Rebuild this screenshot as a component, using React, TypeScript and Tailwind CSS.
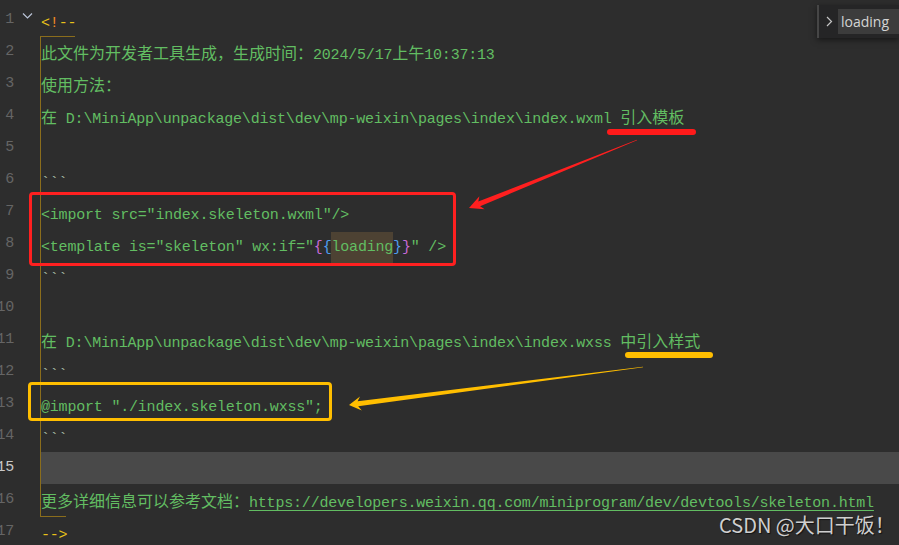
import type { ReactNode } from "react"

const mono = "font-['Liberation_Mono',monospace] text-[15px] tracking-[-0.2px]"

// CJK text sits at 16px full-width cells while the mono font runs at ~8.8px per char
function Zh({ children }: { children: ReactNode }) {
  return <span className="font-['Noto_Sans_CJK_SC',sans-serif] text-[16px] tracking-normal">{children}</span>
}

function Line({
  n,
  active = false,
  guide = true,
  children,
}: {
  n: number
  active?: boolean
  guide?: boolean
  children?: ReactNode
}) {
  return (
    <div className="flex h-8">
      <div className={`relative flex w-10 shrink-0 ${mono}`}>
        <div className={`flex w-[14px] justify-end leading-8 ${active ? "text-[#c8c8c8]" : "text-[#656565]"}`}>{n}</div>
        {n === 1 && (
          <svg className="absolute left-[22px] top-[8px]" width="11" height="8" viewBox="0 0 11 8">
            <path d="M1 1.5 L5.5 6 L10 1.5" fill="none" stroke="#b9c3d6" strokeWidth="1.2" />
          </svg>
        )}
      </div>
      {/* the row's strut uses the CJK font so code-only rows share the same baseline */}
      <div
        className={`relative flex-1 whitespace-nowrap font-['Noto_Sans_CJK_SC',sans-serif] text-[16px] leading-8 ${guide ? "border-l border-[#8a6d1c]" : "pl-px"} ${active ? "bg-[#494949]" : ""}`}
      >
        <span className={mono}>{children}</span>
      </div>
    </div>
  )
}

const green = "text-[#62bd62]"
const fence = "text-[#a3b8a3]"

export default function App() {
  return (
    <div className="relative h-[545px] w-[899px] overflow-hidden bg-[#2d2d2d]">
      <div className="flex flex-col pt-1">
        <Line n={1} guide={false}>
          <span className="text-[#e8c21a]">&lt;</span>
          <span className="text-[#f08a24]">!</span>
          <span className="text-[#e8c21a]">--</span>
        </Line>
        <Line n={2}>
          <span className={green}>
            <Zh>此文件为开发者工具生成，生成时间：</Zh>2024/5/17<Zh>上午</Zh>10:37:13
          </span>
        </Line>
        <Line n={3}>
          <span className={green}>
            <Zh>使用方法：</Zh>
          </span>
        </Line>
        <Line n={4}>
          <span className={green}>
            <Zh>在</Zh> D:\MiniApp\unpackage\dist\dev\mp-weixin\pages\index\index.wxml <Zh>引入模板</Zh>
          </span>
        </Line>
        <Line n={5} />
        <Line n={6}>
          <span className={fence}>```</span>
        </Line>
        <Line n={7}>
          <span className={green}>&lt;import src="index.skeleton.wxml"/&gt;</span>
        </Line>
        <Line n={8}>
          <span className={green}>&lt;template is="skeleton" wx:if="</span>
          <span className="text-[#c86ad8]">{"{"}</span>
          <span className="text-[#4f9ef0]">{"{"}</span>
          <span className={`bg-[#4d4233] py-[7px] ${green}`}>loading</span>
          <span className="text-[#4f9ef0]">{"}"}</span>
          <span className="text-[#c86ad8]">{"}"}</span>
          <span className={green}>" /&gt;</span>
        </Line>
        <Line n={9}>
          <span className={fence}>```</span>
        </Line>
        <Line n={10} />
        <Line n={11}>
          <span className={green}>
            <Zh>在</Zh> D:\MiniApp\unpackage\dist\dev\mp-weixin\pages\index\index.wxss <Zh>中引入样式</Zh>
          </span>
        </Line>
        <Line n={12}>
          <span className={fence}>```</span>
        </Line>
        <Line n={13}>
          <span className={green}>@import "./index.skeleton.wxss";</span>
        </Line>
        <Line n={14}>
          <span className={fence}>```</span>
        </Line>
        <Line n={15} active />
        <Line n={16}>
          <span className={green}>
            <Zh>更多详细信息可以参考文档：</Zh>
            <span className="underline decoration-[#62bd62] underline-offset-[3px]">
              https://developers.weixin.qq.com/miniprogram/dev/devtools/skeleton.html
            </span>
          </span>
        </Line>
        <Line n={17} guide={false}>
          <span className="text-[#e8c21a]">--&gt;</span>
        </Line>
      </div>

      {/* bracket guide ticks */}
      <div className="absolute left-10 top-9 h-px w-[35px] bg-[#8a6d1c]" />
      <div className="absolute left-10 top-[516px] h-px w-[26px] bg-[#8a6d1c]" />

      {/* find widget */}
      <div className="absolute right-0 top-[5px] flex h-[33px] w-[82px] items-center border-l-2 border-[#464646] bg-[#252526] shadow-[0_2px_6px_rgba(0,0,0,0.5)]">
        <svg className="ml-[7px] mr-[5px]" width="7" height="11" viewBox="0 0 7 11">
          <path d="M1 1 L5.5 5.5 L1 10" fill="none" stroke="#c5c5c5" strokeWidth="1.2" />
        </svg>
        <div className="flex h-[25px] flex-1 items-center bg-[#3c3c3c] pl-[3px] font-['Open_Sans',sans-serif] text-[14px] text-[#d4d4d4]">
          loading
        </div>
      </div>

      {/* annotations */}
      <div className="absolute left-[29px] top-[192px] h-[74px] w-[427px] rounded-[4px] border-[3px] border-[#ff2020]" />
      <div className="absolute left-[607px] top-[129px] h-[6px] w-[89px] rounded-full bg-[#ff1a1a]" />
      <div className="absolute left-[28px] top-[382px] h-[39px] w-[304px] rounded-[4px] border-[3px] border-[#ffbe00]" />
      <div className="absolute left-[625px] top-[352px] h-[6px] w-[88px] rounded-full bg-[#ffbe00]" />
      <svg className="pointer-events-none absolute left-0 top-0" width="899" height="545" viewBox="0 0 899 545">
        <polygon
          points="469,208 479.4,196.3 478.3,201.6 636.9,139.7 637.1,140.3 480.1,206.2 484.6,209.2"
          fill="#ff1f1f"
        />
        <polygon
          points="349,405 360,396.6 357.6,401.3 643,366.7 643.1,367.3 358.2,406.3 361.8,410.4"
          fill="#ffbe00"
        />
      </svg>

      {/* watermark */}
      <div className="absolute left-[719px] top-[511px] font-['Noto_Sans_CJK_SC',sans-serif] text-[20px] leading-7 text-[#cfcfcf] [text-shadow:1px_1px_1px_rgba(0,0,0,0.6)]">
        CSDN @大口干饭！
      </div>
    </div>
  )
}
